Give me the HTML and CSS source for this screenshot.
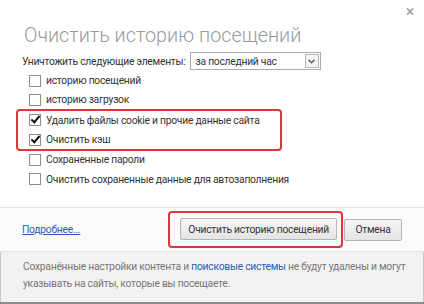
FILE: index.html
```html
<!DOCTYPE html>
<html lang="ru">
<head>
    <meta charset="UTF-8">
    <title>Очистить историю посещений</title>
    <link rel="stylesheet" href="styles.css">
</head>
<body>
    <div class="dialog">
        <div class="dialog__head">
            <h1 class="dialog__title">Очистить историю посещений</h1>
            <span class="dialog__close">&times;</span>
        </div>
        <div class="dialog__body">
            <div class="period">
                <span>Уничтожить следующие элементы:</span>
                <div class="select">
                    <span class="select__value">за последний час</span>
                    <span class="select__arrow">
                        <svg width="7" height="5" viewBox="0 0 7 5"><path d="M0.5 0.8 L3.5 3.8 L6.5 0.8" fill="none" stroke="#555" stroke-width="1.3"/></svg>
                    </span>
                </div>
            </div>
            <div class="items">
                <label class="item"><span class="box"></span>историю посещений</label>
                <label class="item"><span class="box"></span>историю загрузок</label>
                <div class="mark mark--items">
                    <label class="item"><span class="box box--checked"></span>Удалить файлы cookie и прочие данные сайта</label>
                    <label class="item"><span class="box box--checked"></span>Очистить кэш</label>
                </div>
                <label class="item"><span class="box"></span>Сохраненные пароли</label>
                <label class="item"><span class="box"></span>Очистить сохраненные данные для автозаполнения</label>
            </div>
        </div>
        <div class="dialog__buttons">
            <a class="link link--more" href="#">Подробнее...</a>
            <div class="mark mark--button">
                <button class="btn">Очистить историю посещений</button>
            </div>
            <button class="btn btn--cancel">Отмена</button>
        </div>
        <div class="dialog__note">
            Сохранённые настройки контента и <a class="link" href="#">поисковые системы</a> не будут удалены и могут указывать на сайты, которые вы посещаете.
        </div>
    </div>
</body>
</html>
```

FILE: styles.css
```css
:root {
    --textColor: #333;
    --mutedColor: #777;
    --markColor: #d9393b;
    --linkColor: #2f5bb7;
}

html,
body {
    margin: 0;
    height: 100%;
}

body {
    background: #fff;
    font-family: Roboto, "Liberation Sans", sans-serif;
    font-size: 10.3px;
    letter-spacing: -0.25px;
    color: var(--textColor);
}

.dialog {
    display: flex;
    flex-direction: column;
    width: 424px;
    height: 304px;
    box-sizing: border-box;
    border-bottom: 2px solid #8c8c8c;
}

.dialog__head {
    position: relative;
    padding: 22px 24px 0;
}

.dialog__title {
    margin: 0;
    font-size: 19.8px;
    font-weight: 300;
    letter-spacing: 0;
    line-height: 28px;
    color: #9a9a9a;
}

.dialog__close {
    position: absolute;
    top: 2px;
    right: 10px;
    font-size: 16px;
    color: #999;
}

.dialog__body {
    flex: 1;
    padding: 2px 22px 0;
}

.period {
    display: flex;
    align-items: center;
    gap: 4px;
}

.select {
    display: flex;
    align-items: center;
    justify-content: space-between;
    width: 131px;
    height: 18px;
    box-sizing: border-box;
    padding: 0 1px 0 5px;
    border: 1px solid #aaa;
}

.select__arrow {
    display: flex;
    align-items: center;
    justify-content: center;
    width: 14px;
    height: 14px;
    box-sizing: border-box;
    border: 1px solid #b5b5b5;
    background: #f4f4f4;
}

.items {
    display: flex;
    flex-direction: column;
    margin-top: 1px;
}

.item {
    display: flex;
    align-items: center;
    gap: 5px;
    height: 19.3px;
    padding-left: 7px;
    white-space: nowrap;
}

.box {
    position: relative;
    flex: none;
    width: 10px;
    height: 10px;
    border: 1px solid #8e8e8e;
    background: #fff;
}

.box--checked::after {
    position: absolute;
    content: '';
    left: 3px;
    top: -1px;
    width: 3px;
    height: 7px;
    border: solid #111;
    border-width: 0 2px 2px 0;
    transform: rotate(40deg);
}

.mark {
    border: 2px solid var(--markColor);
    border-radius: 4px;
}

.mark--items {
    width: 258px;
    margin-left: -6px;
    padding-left: 4px;
    margin-top: -1px;
    margin-bottom: -1px;
}

.dialog__buttons {
    display: flex;
    align-items: center;
    height: 43px;
    padding: 0 22px;
    border-top: 1px solid #e6e6e6;
    border-bottom: 1px solid #e6e6e6;
    background: #fbfbfb;
}

.link {
    color: var(--linkColor);
    text-decoration: none;
}

.link--more {
    text-decoration: underline;
    margin-right: auto;
}

.mark--button {
    padding: 5px 4px 6px 10px;
    margin-right: 1px;
}

.btn {
    height: 22px;
    padding: 0 7px;
    border: 1px solid #b4b4b4;
    border-radius: 2px;
    background: linear-gradient(#f6f6f6, #e4e4e4);
    font: inherit;
    letter-spacing: inherit;
    color: var(--textColor);
}

.btn--cancel {
    width: 58px;
}

.dialog__note {
    padding: 6px 8px 0 22px;
    height: 50px;
    box-sizing: border-box;
    background: #f2f2f2;
    color: var(--mutedColor);
    line-height: 17px;
    border-left: 1px solid #c8c8c8;
    border-right: 1px solid #c8c8c8;
}
```
